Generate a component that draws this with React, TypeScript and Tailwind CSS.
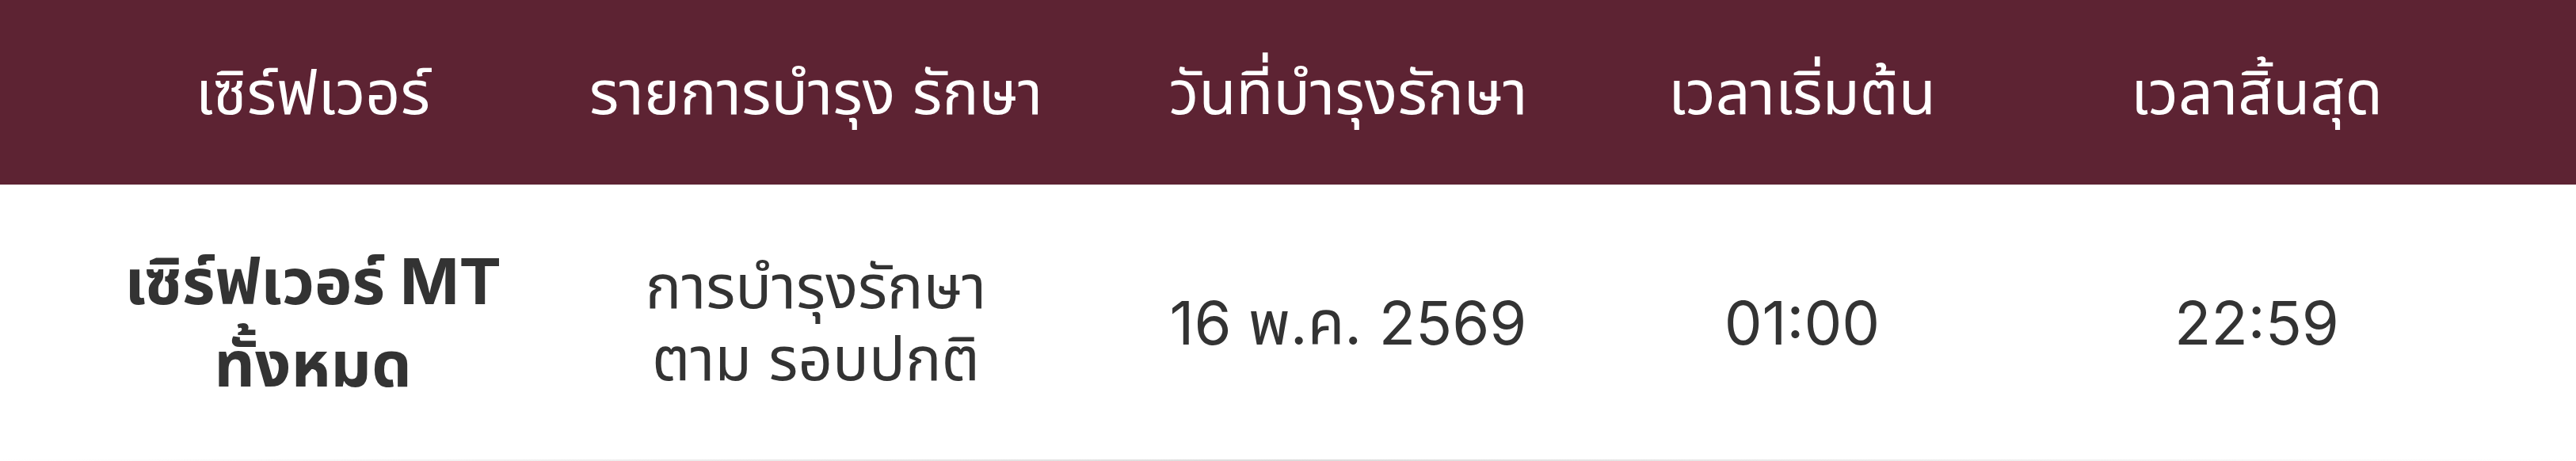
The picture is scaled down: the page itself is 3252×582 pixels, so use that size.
const headers = ['เซิร์ฟเวอร์', 'รายการบำรุง รักษา', 'วันที่บำรุงรักษา', 'เวลาเริ่มต้น', 'เวลาสิ้นสุด'];

export default function App() {
  return (
    <div className="w-[3252px] h-[582px] bg-white font-['Inter','Noto_Sans_Thai','Noto_Sans',sans-serif] text-[#333333]">
      <div className="grid grid-cols-[790px_480px_864px_282px_836px] h-[233px] bg-[#5d2333] text-white">
        {headers.map((h, i) => (
          <div
            key={h}
            className={`flex items-center justify-center whitespace-nowrap text-[77px] leading-none ${i === 4 ? 'pl-[30px]' : ''}`}
          >
            {h}
          </div>
        ))}
      </div>
      <div className="grid grid-cols-[790px_480px_864px_282px_836px] h-[347px]">
        <div className="flex items-center justify-center text-center whitespace-nowrap text-[80px] font-bold leading-[104px]">
          <span>
            เซิร์ฟเวอร์ MT
            <br />
            ทั้งหมด
          </span>
        </div>
        <div className="flex items-center justify-center text-center whitespace-nowrap text-[76px] leading-[91px]">
          <span>
            การบำรุงรักษา
            <br />
            ตาม รอบปกติ
          </span>
        </div>
        <div className="flex items-center justify-center whitespace-nowrap text-[76px]">16 พ.ค. 2569</div>
        <div className="flex items-center justify-center whitespace-nowrap text-[76px]">01:00</div>
        <div className="flex items-center justify-center whitespace-nowrap text-[76px] pl-[30px]">22:59</div>
      </div>
      <div className="h-[2px] bg-gradient-to-r from-transparent via-[#dcdcdc] to-transparent" />
    </div>
  );
}
